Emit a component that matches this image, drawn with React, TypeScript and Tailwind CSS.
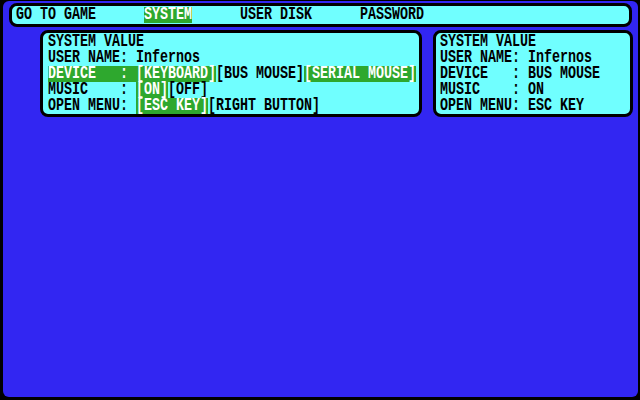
type Seg = [string, boolean?];

const font = "font-['Liberation_Mono',monospace]";

function Line({ segs }: { segs: Seg[] }) {
  return (
    <div className="flex h-4 whitespace-pre">
      {segs.map(([text, hl], i) => (
        <span
          key={i}
          className={hl ? "flex h-4 items-center bg-[#2ea82e] text-white" : "flex h-4 items-center text-black"}
        >
          <span className="block h-[11px] -translate-y-px scale-y-[1.42] text-[13.333px] leading-[11px] font-bold">
            {text}
          </span>
        </span>
      ))}
    </div>
  );
}

const cyan = "bg-[#70ffff]";

function Panel({ width, pl, rows }: { width: string; pl: string; rows: Seg[][] }) {
  return (
    <div className={`${width} ${pl} h-[87px] rounded-[8px] border-[3px] border-black pt-px ${cyan}`}>
      {rows.map((r, i) => (
        <Line key={i} segs={r} />
      ))}
    </div>
  );
}

export default function App() {
  const left: Seg[][] = [
    [["SYSTEM VALUE"]],
    [["USER NAME: Infernos"]],
    [["DEVICE   : ", true], ["[KEYBOARD]", true], ["[BUS MOUSE]"], ["[SERIAL MOUSE]", true]],
    [["MUSIC    : "], ["[ON]", true], ["[OFF]"]],
    [["OPEN MENU: "], ["[ESC KEY]", true], ["[RIGHT BUTTON]"]],
  ];
  const right: Seg[][] = [
    [["SYSTEM VALUE"]],
    [["USER NAME: Infernos"]],
    [["DEVICE   : BUS MOUSE"]],
    [["MUSIC    : ON"]],
    [["OPEN MENU: ESC KEY"]],
  ];

  return (
    <div className={`h-[400px] w-[640px] bg-black pt-px pr-[2px] pb-[3px] pl-[3px] ${font}`}>
      <div className="h-full rounded-[6px] bg-[#3226f2] pt-[2px]">
        <div className={`ml-[6px] h-[24px] w-[623px] rounded-[8px] border-[3px] border-black pt-px pl-[4px] ${cyan}`}>
          <Line
            segs={[
              ["GO TO GAME      "],
              ["SYSTEM", true],
              ["      USER DISK      PASSWORD"],
            ]}
          />
        </div>
        <div className="mt-[3px] flex gap-[11px] pl-[37px]">
          <Panel width="w-[382px]" pl="pl-[5px]" rows={left} />
          <Panel width="w-[200px]" pl="pl-[4px]" rows={right} />
        </div>
      </div>
    </div>
  );
}
